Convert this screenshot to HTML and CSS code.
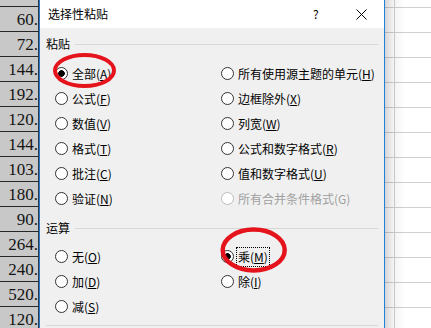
FILE: index.html
```html
<!DOCTYPE html>
<html lang="zh-CN">
<head>
<meta charset="utf-8">
<title>选择性粘贴</title>
<link rel="stylesheet" href="styles.css">
</head>
<body>
<div class="page">
  <div class="sheet-col">
    <div class="cells">
      <div class="cell">216.</div>
      <div class="cell">60.</div>
      <div class="cell">72.</div>
      <div class="cell">144.</div>
      <div class="cell">192.</div>
      <div class="cell">120.</div>
      <div class="cell">144.</div>
      <div class="cell">103.</div>
      <div class="cell">180.</div>
      <div class="cell">90.</div>
      <div class="cell">264.</div>
      <div class="cell">240.</div>
      <div class="cell">520.</div>
      <div class="cell">120.</div>
    </div>
  </div>

  <div class="dialog">
    <div class="titlebar">
      <span class="title">选择性粘贴</span>
      <span class="help">?</span>
      <span class="close"><svg width="11" height="11" viewBox="0 0 11 11"><path d="M0.5 0.5 L10.5 10.5 M10.5 0.5 L0.5 10.5" stroke="#000" stroke-width="1" fill="none"/></svg></span>
    </div>
    <div class="body">
      <div class="group-label first"><span>粘贴</span><i class="rule"></i></div>
      <div class="options paste">
        <label class="opt"><span class="radio on"></span><span>全部(<u>A</u>)</span></label>
        <label class="opt"><span class="radio"></span><span>所有使用源主题的单元(<u>H</u>)</span></label>
        <label class="opt"><span class="radio"></span><span>公式(<u>F</u>)</span></label>
        <label class="opt"><span class="radio"></span><span>边框除外(<u>X</u>)</span></label>
        <label class="opt"><span class="radio"></span><span>数值(<u>V</u>)</span></label>
        <label class="opt"><span class="radio"></span><span>列宽(<u>W</u>)</span></label>
        <label class="opt"><span class="radio"></span><span>格式(<u>T</u>)</span></label>
        <label class="opt"><span class="radio"></span><span>公式和数字格式(<u>R</u>)</span></label>
        <label class="opt"><span class="radio"></span><span>批注(<u>C</u>)</span></label>
        <label class="opt"><span class="radio"></span><span>值和数字格式(<u>U</u>)</span></label>
        <label class="opt"><span class="radio"></span><span>验证(<u>N</u>)</span></label>
        <label class="opt disabled"><span class="radio"></span><span>所有合并条件格式(G)</span></label>
      </div>
      <div class="group-label second"><span>运算</span><i class="rule"></i></div>
      <div class="options ops">
        <label class="opt"><span class="radio"></span><span>无(<u>O</u>)</span></label>
        <label class="opt"><span class="radio on"></span><span class="focus">乘(<u>M</u>)</span></label>
        <label class="opt"><span class="radio"></span><span>加(<u>D</u>)</span></label>
        <label class="opt"><span class="radio"></span><span>除(<u>I</u>)</span></label>
        <label class="opt"><span class="radio"></span><span>减(<u>S</u>)</span></label>
      </div>
      <div class="bottom-rule"></div>
    </div>
  </div>

  <div class="sheet-right"></div>

  <svg class="marks" width="431" height="328" viewBox="0 0 431 328">
    <ellipse cx="84.5" cy="70.5" rx="29.5" ry="15.5" fill="none" stroke="#e5131b" stroke-width="4"/>
    <ellipse cx="253.7" cy="250" rx="31" ry="20.5" fill="none" stroke="#e5131b" stroke-width="4.5"/>
  </svg>
</div>
</body>
</html>
```

FILE: styles.css
```css
* { box-sizing: border-box; }

html, body {
  margin: 0;
  padding: 0;
  width: 431px;
  height: 328px;
  overflow: hidden;
  background: #fff;
}

.page {
  position: relative;
  display: flex;
  width: 431px;
  height: 328px;
  overflow: hidden;
  font-family: "Noto Sans CJK SC", "Microsoft YaHei", sans-serif;
  font-size: 12px;
  color: #000;
}

/* left spreadsheet column */
.sheet-col {
  width: 39px;
  flex: none;
  height: 328px;
  overflow: hidden;
  background: #c8c8c8;
  border-right: 1px solid #2f3a48;
}

.cells {
  margin-top: -18px;
}

.cell {
  height: 25px;
  border-bottom: 1px solid #262626;
  padding-top: 2px;
  line-height: 22px;
  text-align: right;
  font-family: "Liberation Serif", "Times New Roman", serif;
  font-size: 17px;
  color: #141414;
  white-space: nowrap;
  overflow: hidden;
}

/* dialog */
.dialog {
  width: 346px;
  flex: none;
  height: 328px;
  border-left: 1px solid #2b78c8;
  border-right: 1px solid #1a82d8;
  background: #f0f0f0;
  display: flex;
  flex-direction: column;
}

.titlebar {
  height: 28px;
  flex: none;
  background: #fff;
  display: flex;
  align-items: center;
  padding-left: 8px;
  padding-right: 17px;
}

.title {
  flex: 1;
  line-height: 16px;
}

.help {
  width: 6px;
  line-height: 16px;
  margin-right: 37px;
}

.close {
  width: 11px;
  height: 11px;
  display: flex;
}

.body {
  display: flex;
  flex-direction: column;
}

.group-label {
  height: 16px;
  display: flex;
  align-items: center;
  padding: 0 6px;
  line-height: 16px;
}

.group-label.first { margin-top: 8px; }
.group-label.second { margin-top: 9px; }

.rule {
  flex: 1;
  height: 1px;
  margin-left: 5px;
  background: #d7d7d7;
}

.options {
  display: grid;
  grid-template-columns: 166px 1fr;
  grid-auto-rows: 25px;
  padding-left: 15px;
}

.options.paste { margin-top: 9px; }
.options.ops { margin-top: 8px; }

.opt {
  display: flex;
  align-items: center;
  gap: 4px;
  white-space: nowrap;
  line-height: 16px;
}

.opt u {
  text-decoration: underline;
  text-underline-offset: 1px;
}

.radio {
  width: 13px;
  height: 13px;
  flex: none;
  border-radius: 50%;
  border: 1px solid #333;
  background: #fff;
}

.radio.on {
  background: radial-gradient(circle, #000 0, #000 3px, #fff 3.6px);
}

.opt.disabled {
  color: #a0a0a0;
}

.opt.disabled .radio {
  border-color: #bcbcbc;
}

.focus {
  border: 1px dotted #000;
  padding: 1px 1px;
  margin-left: -2px;
}

.bottom-rule {
  height: 1px;
  margin-top: 6px;
  margin-left: 6px;
  margin-right: 6px;
  background: #d7d7d7;
}

/* right spreadsheet area */
.sheet-right {
  flex: 1;
  height: 328px;
  background:
    linear-gradient(to right, rgba(0, 0, 0, 0.16), rgba(0, 0, 0, 0.05) 8px, rgba(0, 0, 0, 0) 20px),
    linear-gradient(to right, transparent 9px, #d0d0d0 9px, #d0d0d0 10px, transparent 10px),
    repeating-linear-gradient(to bottom, transparent 0, transparent 7px, #d0d0d0 7px, #d0d0d0 8px, transparent 8px, transparent 25px),
    #fff;
}

/* hand-drawn annotation marks */
.marks {
  position: absolute;
  left: 0;
  top: 0;
  pointer-events: none;
}
```
